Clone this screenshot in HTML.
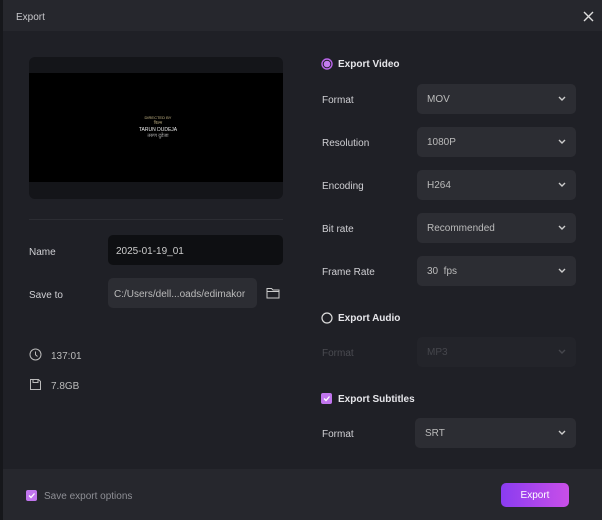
<!DOCTYPE html>
<html><head><style>
*{margin:0;padding:0;box-sizing:border-box}
body{width:602px;height:520px;background:#16171b;font-family:"Liberation Sans",sans-serif;font-size:10px;color:#d8d8dc;position:relative;overflow:hidden}
.dlg{position:absolute;left:3px;top:0;width:599px;height:520px;background:#1f2026}
.title{position:absolute;left:0;top:0;width:599px;height:31px;background:#26272d}
.abs{position:absolute}
.lbl{position:absolute;font-size:10px;color:#d0d0d4;transform:translateY(1px)}
.sel{position:absolute;left:417px;width:159px;height:30px;background:#2c2d33;border-radius:5px;color:#bbb;padding:10px 10px 0;font-size:10px}
.sel svg{position:absolute;right:10px;top:12px}
.foot{position:absolute;left:3px;top:469px;width:599px;height:51px;background:#26272d}
</style></head><body>
<div class="dlg"></div>
<div class="title abs" style="left:3px"></div>
<div class="lbl" style="left:16px;top:11px;color:#c8c8cc">Export</div>
<svg class="abs" style="left:583px;top:11px" width="11" height="11"><path d="M1 1L10 10M10 1L1 10" stroke="#ddd" stroke-width="1.4"/></svg>

<div class="abs" style="left:29px;top:57px;width:254px;height:142px;background:#141519;border-radius:6px"></div>
<div class="abs" style="left:29px;top:73px;width:254px;height:109px;background:#000"></div>
<div class="abs" style="left:140px;top:115px;width:36px;text-align:center;font-size:4px;line-height:5px;color:#c9b98a">DIRECTED BY<br>फिल्म</div>
<div class="abs" style="left:138px;top:127px;width:40px;text-align:center;font-size:5px;line-height:6px;color:#eee">TARUN DUDEJA<br><span style="color:#aaa">तरुण दुडेजा</span></div>

<div class="abs" style="left:29px;top:219px;width:254px;height:1px;background:#2c2d33"></div>
<div class="lbl" style="left:29px;top:246px">Name</div>
<div class="abs" style="left:108px;top:235px;width:175px;height:30px;background:#0e0f12;border-radius:5px;padding:11px 8px 0;color:#ccc">2025-01-19_01</div>
<div class="lbl" style="left:29px;top:289px">Save to</div>
<div class="abs" style="left:108px;top:278px;width:149px;height:30px;background:#2c2d33;border-radius:5px;padding:11px 6px 0;color:#bbb;white-space:nowrap;overflow:hidden">C:/Users/dell...oads/edimakor</div>
<svg class="abs" style="left:266px;top:287px" width="14" height="12"><path d="M1 1.5H5.5L7 3H13V11H1Z M1 4.5H13" fill="none" stroke="#ccc" stroke-width="1"/></svg>

<svg class="abs" style="left:29px;top:348px" width="13" height="13"><circle cx="6.5" cy="6.5" r="5.5" fill="none" stroke="#bbb" stroke-width="1"/><path d="M6.5 3.5V6.8L8.5 8.5" fill="none" stroke="#bbb"/></svg>
<div class="lbl" style="left:51px;top:350px;color:#bbb">137:01</div>
<svg class="abs" style="left:29px;top:378px" width="13" height="13"><path d="M1.5 1.5H9.5L11.5 3.5V11.5H1.5Z M4 1.5V4.5H9V1.5" fill="none" stroke="#bbb" stroke-width="1"/></svg>
<div class="lbl" style="left:51px;top:380px;color:#bbb">7.8GB</div>

<svg class="abs" style="left:321px;top:58px" width="12" height="12"><circle cx="6" cy="6" r="5" fill="none" stroke="#b865e8" stroke-width="1.4"/><circle cx="6" cy="6" r="3.3" fill="#c47cf0"/></svg>
<div class="lbl" style="left:338px;top:58px;font-weight:bold;color:#e6e6ea">Export Video</div>

<div class="lbl" style="left:322px;top:94px">Format</div>
<div class="sel" style="top:84px">MOV<svg width="8" height="6"><path d="M1 1L4 4L7 1" fill="none" stroke="#ccc" stroke-width="1.4"/></svg></div>
<div class="lbl" style="left:322px;top:137px">Resolution</div>
<div class="sel" style="top:127px">1080P<svg width="8" height="6"><path d="M1 1L4 4L7 1" fill="none" stroke="#ccc" stroke-width="1.4"/></svg></div>
<div class="lbl" style="left:322px;top:180px">Encoding</div>
<div class="sel" style="top:170px">H264<svg width="8" height="6"><path d="M1 1L4 4L7 1" fill="none" stroke="#ccc" stroke-width="1.4"/></svg></div>
<div class="lbl" style="left:322px;top:223px">Bit rate</div>
<div class="sel" style="top:213px">Recommended<svg width="8" height="6"><path d="M1 1L4 4L7 1" fill="none" stroke="#ccc" stroke-width="1.4"/></svg></div>
<div class="lbl" style="left:322px;top:266px">Frame Rate</div>
<div class="sel" style="top:256px">30&nbsp; fps<svg width="8" height="6"><path d="M1 1L4 4L7 1" fill="none" stroke="#ccc" stroke-width="1.4"/></svg></div>

<svg class="abs" style="left:321px;top:312px" width="12" height="12"><circle cx="6" cy="6" r="5" fill="none" stroke="#ddd" stroke-width="1.2"/></svg>
<div class="lbl" style="left:338px;top:312px;font-weight:bold;color:#e6e6ea">Export Audio</div>
<div class="lbl" style="left:322px;top:347px;color:#4a4b51">Format</div>
<div class="sel" style="top:337px;background:#23242a;color:#45464c">MP3<svg width="8" height="6"><path d="M1 1L4 4L7 1" fill="none" stroke="#45464c" stroke-width="1.4"/></svg></div>

<div class="abs" style="left:321px;top:393px;width:11px;height:11px;background:#c175ee;border-radius:2px"></div>
<svg class="abs" style="left:321px;top:393px" width="11" height="11"><path d="M3 5.5L5 7.5L8.5 3.5" fill="none" stroke="#fff" stroke-width="1.3"/></svg>
<div class="lbl" style="left:338px;top:393px;font-weight:bold;color:#e6e6ea">Export Subtitles</div>
<div class="lbl" style="left:322px;top:428px">Format</div>
<div class="sel" style="top:418px;left:415px;width:161px">SRT<svg width="8" height="6"><path d="M1 1L4 4L7 1" fill="none" stroke="#ccc" stroke-width="1.4"/></svg></div>

<div class="foot"></div>
<div class="abs" style="left:26px;top:490px;width:11px;height:11px;background:#c175ee;border-radius:2px"></div>
<svg class="abs" style="left:26px;top:490px" width="11" height="11"><path d="M3 5.5L5 7.5L8.5 3.5" fill="none" stroke="#fff" stroke-width="1.3"/></svg>
<div class="lbl" style="left:44px;top:490px;color:#8e8f95">Save export options</div>
<div class="abs" style="left:501px;top:483px;width:68px;height:24px;border-radius:5px;background:linear-gradient(90deg,#8a3cf0,#c94fe8);color:#fff;text-align:center;line-height:25px;font-size:10px">Export</div>
</body></html>
